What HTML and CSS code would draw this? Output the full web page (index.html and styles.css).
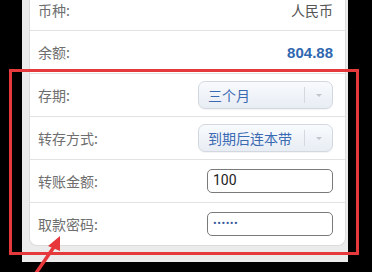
FILE: index.html
```html
<!DOCTYPE html>
<html>
<head>
    <title>定期转存</title>
    <meta name="viewport" content="width=device-width, initial-scale=1.0">
    <link rel="stylesheet" href="styles.css">
</head>
<body>
    <div class="page">
        <div class="card">
            <div class="row first">
                <span class="label">币种:</span>
                <span class="value">人民币</span>
            </div>
            <div class="row">
                <span class="label">余额:</span>
                <span class="value amount">804.88</span>
            </div>
            <div class="row">
                <span class="label">存期:</span>
                <div class="select">
                    <span class="select-text">三个月</span>
                    <span class="select-arrow"></span>
                </div>
            </div>
            <div class="row">
                <span class="label">转存方式:</span>
                <div class="select">
                    <span class="select-text">到期后连本带</span>
                    <span class="select-arrow"></span>
                </div>
            </div>
            <div class="row">
                <span class="label">转账金额:</span>
                <div class="input">100</div>
            </div>
            <div class="row last">
                <span class="label">取款密码:</span>
                <div class="input password">••••••</div>
            </div>
        </div>
    </div>

    <!-- annotation -->
    <div class="highlight"></div>
    <svg class="pointer" width="60" height="46" viewBox="0 0 60 46">
        <line x1="12" y1="50" x2="34" y2="18" stroke="#e8373a" stroke-width="3.5"/>
        <polygon points="38,10 26,20 38,25" fill="#e8373a"/>
    </svg>
</body>
</html>
```

FILE: styles.css
```css
body {
    margin: 0;
    width: 372px;
    height: 272px;
    background: #000;
    font-family: "Noto Sans CJK SC", "Noto Sans", sans-serif;
    overflow: hidden;
    position: relative;
}

.page {
    margin-left: 22px;
    width: 317px;
    height: 272px;
    padding: 0 2px 0 7px;
    background: #ebebeb;
}

.card {
    margin-top: -10px;
    background: #fff;
    border: 1px solid #dcdcdc;
    border-top: none;
    border-radius: 0 0 8px 8px;
    display: flex;
    flex-direction: column;
}

.row {
    height: 43px;
    display: flex;
    align-items: center;
    justify-content: space-between;
    padding: 0 12px 0 8px;
    border-bottom: 1px solid #e2e2e2;
    box-sizing: border-box;
}

.row.first {
    height: 41px;
}

.row.last {
    border-bottom: none;
    height: 42px;
}

.label {
    font-size: 14px;
    color: #6e6e6e;
}

.value {
    font-size: 14px;
    color: #555;
}

.amount {
    font-family: "Liberation Sans", Arial, sans-serif;
    font-weight: bold;
    font-size: 15px;
    color: #2f68b0;
}

.select {
    width: 135px;
    height: 28px;
    box-sizing: border-box;
    border: 1px solid #d3d8e0;
    border-radius: 7px;
    background: linear-gradient(#f8fafd, #e8edf4);
    display: flex;
    align-items: center;
    justify-content: space-between;
    box-shadow: 0 1px 1px rgba(0,0,0,0.05);
}

.select-text {
    padding-left: 9px;
    font-size: 14px;
    color: #3a6ab2;
}

.select-arrow {
    width: 27px;
    height: 16px;
    border-left: 1px solid #d5d9df;
    position: relative;
}

.select-arrow::after {
    content: "";
    position: absolute;
    left: 11px;
    top: 7px;
    border-left: 3px solid transparent;
    border-right: 3px solid transparent;
    border-top: 3px solid #c2c6cc;
}

.input {
    width: 126px;
    height: 24px;
    box-sizing: border-box;
    border: 1.5px solid #7a7a7a;
    border-radius: 5px;
    padding-left: 5px;
    font-family: "Roboto", "Liberation Sans", sans-serif;
    font-size: 14px;
    line-height: 21px;
    color: #222;
}

.input.password {
    font-size: 11px;
    letter-spacing: 0.5px;
    color: #3c5e9e;
}

.highlight {
    position: absolute;
    left: 9px;
    top: 69px;
    width: 344px;
    height: 180px;
    border: 3px solid #e53a3c;
}

.pointer {
    position: absolute;
    left: 22px;
    top: 226px;
}
```
